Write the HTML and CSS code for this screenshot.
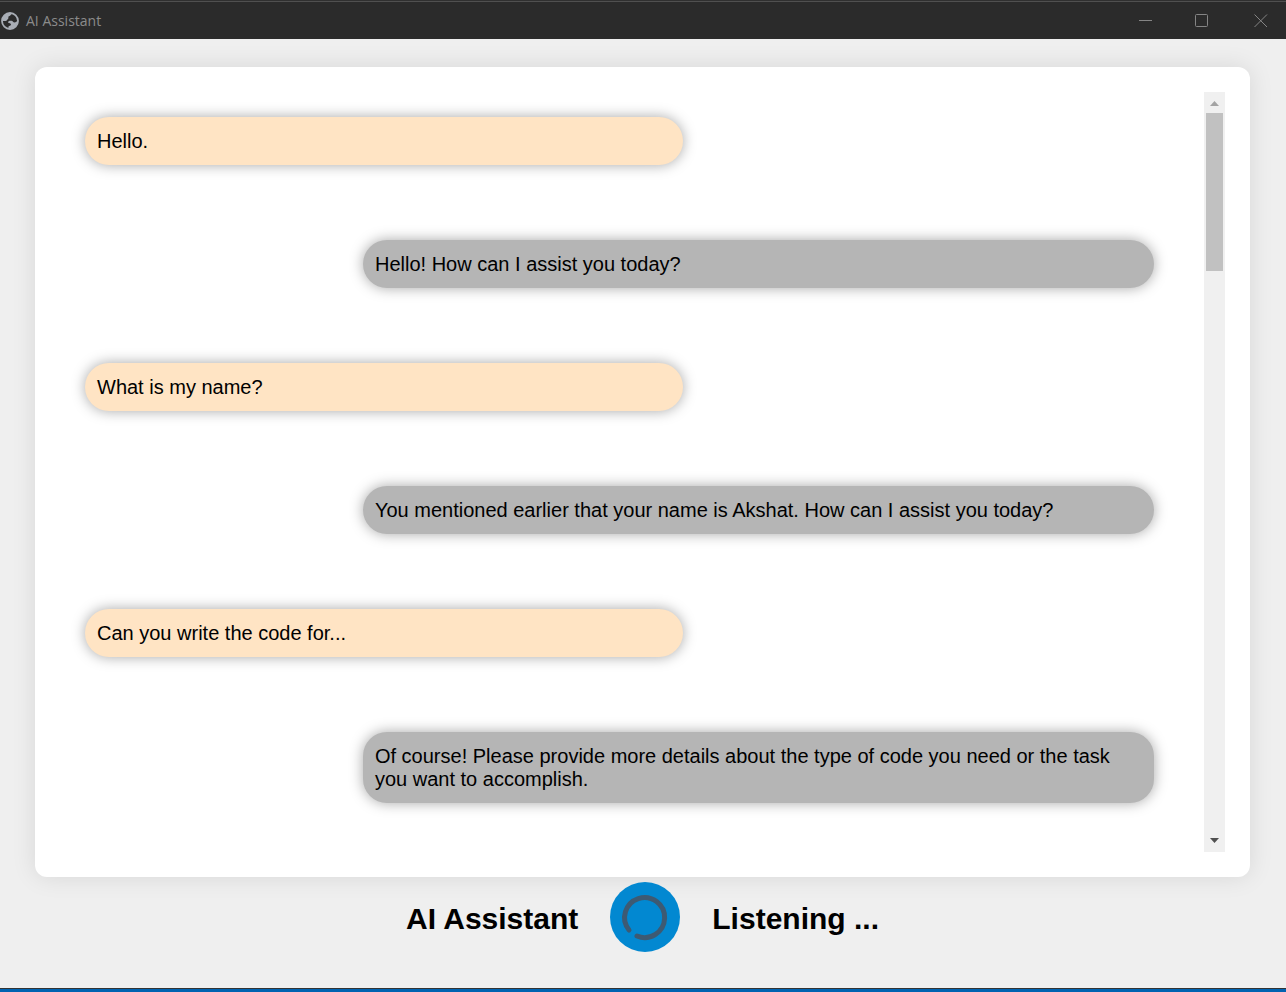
FILE: index.html
```html
<!DOCTYPE html>
<html lang="en">
<head>
<meta charset="utf-8">
<title>AI Assistant</title>
<link rel="stylesheet" href="styles.css">
</head>
<body>
<header class="titlebar">
  <svg class="globe" viewBox="0 0 18 18" aria-hidden="true">
    <circle cx="9" cy="9" r="8" fill="#2b2b2b" stroke="#a8adb5" stroke-width="1.8"/>
    <path fill="#a8adb5" d="M10.500 1C10.500 3 9 4 7.500 4.500 7 5.500 8 6 7 7 6 7.500 6 9 4.500 9H1C1 4 5 0.500 10.500 1Z"/>
    <path fill="#a8adb5" d="M17 9C17 14 13 17 7.500 16.800V14.500C8 13.500 10 14 10 12.500 10 11 8 11.500 7 10.500 7 9 8.500 8.500 10.500 8.800 12 9 12 10.500 13.500 10.500 15 10.500 15.500 9 17 9Z"/>
  </svg>
  <span class="titlebar-name">AI Assistant</span>
  <button class="window-button" aria-label="Minimize"><svg viewBox="0 0 14 14"><path d="M0 6.500H13"/></svg></button>
  <button class="window-button" aria-label="Maximize"><svg viewBox="0 0 14 14"><rect x="0.500" y="0.500" width="12" height="12" rx="1"/></svg></button>
  <button class="window-button" aria-label="Close"><svg viewBox="0 0 14 14"><path d="M0.500 0.500 13 13M13 0.500 0.500 13"/></svg></button>
</header>
<main class="app">
  <section class="card" aria-label="Conversation">
    <div class="messages">
      <p class="bubble user">Hello.</p>
      <p class="bubble assistant">Hello! How can I assist you today?</p>
      <p class="bubble user">What is my name?</p>
      <p class="bubble assistant">You mentioned earlier that your name is Akshat. How can I assist you today?</p>
      <p class="bubble user">Can you write the code for...</p>
      <p class="bubble assistant">Of course! Please provide more details about the type of code you need or the task you want to accomplish.</p>
    </div>
    <div class="scrollbar">
      <button class="scroll-arrow up" aria-label="Scroll up"><svg viewBox="0 0 9 5"><path d="M0 5 4.500 0 9 5Z"/></svg></button>
      <div class="track"><div class="thumb"></div></div>
      <button class="scroll-arrow down" aria-label="Scroll down"><svg viewBox="0 0 9 5"><path d="M0 0 4.500 5 9 0Z"/></svg></button>
    </div>
  </section>
  <footer class="status">
    <h1 class="status-text">AI Assistant</h1>
    <button class="listen" aria-label="Listening">
      <svg viewBox="0 0 70 70"><path d="M19 48A20 20 0 1 1 27 54"/></svg>
    </button>
    <h1 class="status-text">Listening ...</h1>
  </footer>
</main>
</body>
</html>
```
FILE: styles.css
```css
* {
  box-sizing: border-box;
}

body {
  margin: 0;
  min-height: 100vh;
  display: flex;
  flex-direction: column;
  background: #efefef;
  border-bottom: 3px solid #0063b1;
  color: #000;
  font-family: "Liberation Sans", Arial, sans-serif;
}

button {
  padding: 0;
  border: 0;
  background: none;
}

.titlebar {
  display: flex;
  align-items: center;
  height: 39px;
  padding: 2px 0 0 1px;
  background: linear-gradient(#303030 1px, #505050 1px, #505050 2px, #2b2b2b 2px);
}

.globe {
  width: 18px;
  height: 18px;
}

.titlebar-name {
  flex: 1;
  margin-left: 7px;
  color: #8b8b8b;
  font-family: "Open Sans", "Segoe UI", sans-serif;
  font-size: 14px;
}

.window-button {
  display: flex;
  align-items: center;
  justify-content: center;
  width: 56px;
  height: 100%;
}

.window-button:last-child {
  padding-left: 6px;
}

.window-button svg {
  width: 14px;
  height: 14px;
  fill: none;
  stroke: #858585;
}

.app {
  flex: 1;
  display: flex;
  flex-direction: column;
  padding: 28px 36px 36px 35px;
  border-bottom: 1px solid #333;
}

.card {
  flex: 1;
  display: flex;
  padding: 25px;
  background: #fff;
  border-radius: 12px;
  box-shadow: 0 0 25px rgba(0, 0, 0, 0.1);
}

.messages {
  flex: 1;
  display: flex;
  flex-direction: column;
  gap: 75px;
  padding: 25px 50px 25px 25px;
}

.bubble {
  margin: 0;
  padding: 13px 12px 12px;
  border-radius: 24px;
  box-shadow: 0 0 14px rgba(0, 0, 0, 0.35);
  font-size: 20px;
  line-height: 23px;
}

.user {
  width: 55.9%;
  background: #ffe4c4;
}

.assistant {
  align-self: flex-end;
  width: 74%;
  background: #b5b5b5;
}

.scrollbar {
  display: flex;
  flex-direction: column;
  width: 21px;
  background: #f0f0f0;
}

.scroll-arrow {
  display: flex;
  align-items: center;
  justify-content: center;
  height: 21px;
}

.scroll-arrow svg {
  width: 9px;
  height: 5px;
}

.up {
  padding-top: 2px;
  fill: #a3a3a3;
}

.down {
  padding-bottom: 2px;
  fill: #505050;
}

.track {
  flex: 1;
  padding: 0 2px;
}

.thumb {
  height: 22%;
  background: #c1c1c1;
}

.status {
  display: flex;
  justify-content: center;
  align-items: center;
  gap: 32px;
  padding-top: 5px;
}

.status-text {
  margin: 0;
  padding-top: 4px;
  font-size: 30px;
}

.listen {
  height: 70px;
  border-radius: 50%;
  background: #0288d1;
}

.listen svg {
  display: block;
  width: 70px;
  height: 70px;
  fill: none;
  stroke: #3d5a73;
  stroke-width: 5;
  stroke-linecap: round;
}
```
